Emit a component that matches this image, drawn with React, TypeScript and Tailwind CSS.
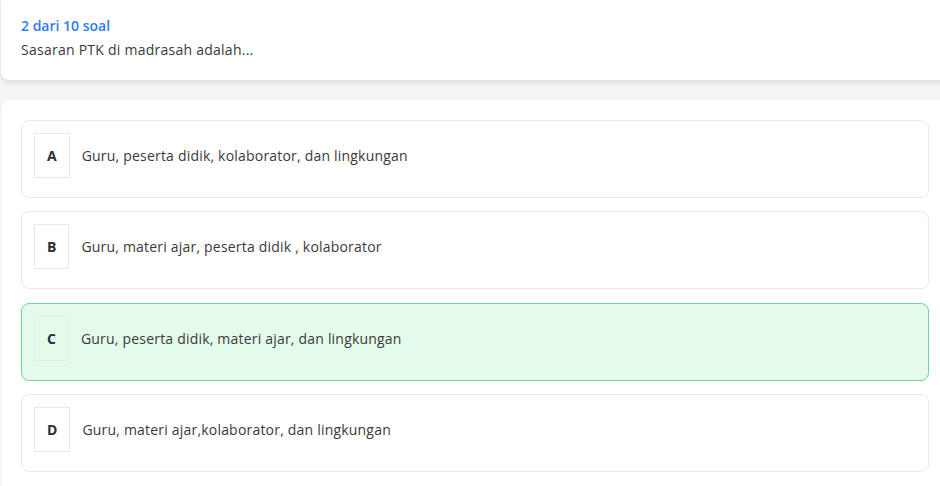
import React from "react";

const options = [
  { key: "A", text: "Guru, peserta didik, kolaborator, dan lingkungan", active: false },
  { key: "B", text: "Guru, materi ajar, peserta didik , kolaborator", active: false },
  { key: "C", text: "Guru, peserta didik, materi ajar, dan lingkungan", active: true },
  { key: "D", text: "Guru, materi ajar,kolaborator, dan lingkungan", active: false },
];

export default function App() {
  return (
    <div
      className="w-[940px] h-[486px] overflow-hidden bg-[#f5f5f5]"
      style={{ fontFamily: '"Open Sans", "Noto Sans", sans-serif' }}
    >
      <div className="ml-[1px] w-[960px] h-[80px] bg-white rounded-bl-lg shadow-[0_2px_6px_rgba(0,0,0,0.12)] pl-5 pt-[16px]">
        <div className="text-[14px] leading-[20px] font-semibold text-[#2f7cf6]">2 dari 10 soal</div>
        <div className="mt-[4px] text-[14px] leading-[20px] tracking-[0.25px] text-[#3a3a3a]">Sasaran PTK di madrasah adalah...</div>
      </div>
      <div className="ml-[2px] mt-[20px] w-[960px] h-[420px] bg-white rounded-tl-lg pl-[19px] pt-[20px]">
        <div className="w-[908px] flex flex-col gap-[13.3px]">
          {options.map((o) => (
            <div
              key={o.key}
              className={
                o.active
                  ? "h-[78px] rounded-lg border border-[#74d49a] bg-[#e4fbec] pl-3 pt-3 flex items-start"
                  : "h-[78px] rounded-lg border border-[#e6e9ef] bg-white pl-3 pt-3 flex items-start"
              }
            >
              <div className="h-[45px] px-3 border border-[#e6e9ef] flex items-center justify-center text-[14px] font-bold text-[#2b2f36]">
                {o.key}
              </div>
              <div className="ml-3 h-[45px] flex items-center text-[14px] tracking-[0.2px] text-[#3a3a3a]">{o.text}</div>
            </div>
          ))}
        </div>
      </div>
    </div>
  );
}
